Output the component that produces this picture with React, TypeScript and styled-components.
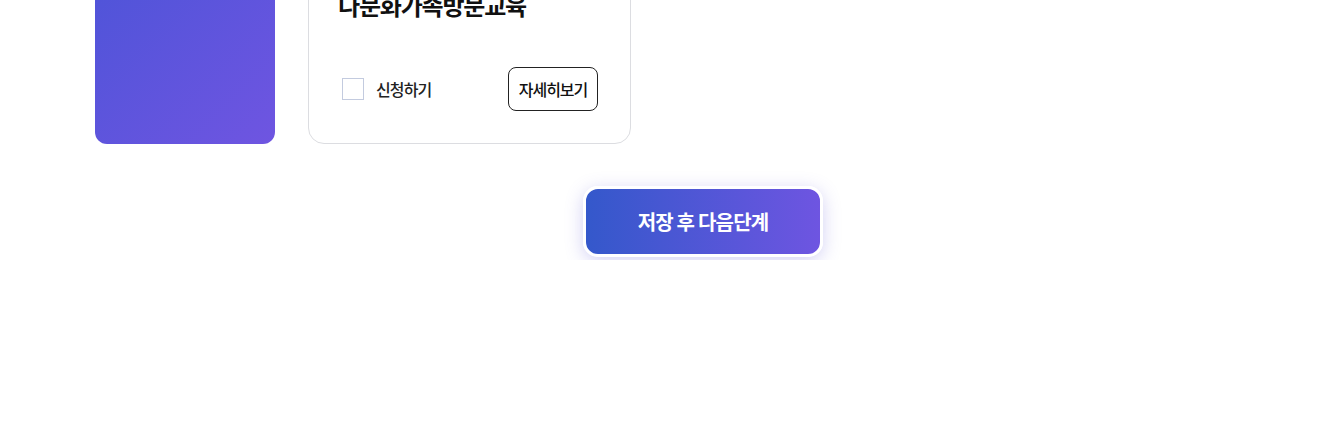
import React from 'react';
import styled, { createGlobalStyle } from 'styled-components';

const GlobalStyle = createGlobalStyle`
  html, body {
    margin: 0;
    padding: 0;
    background: #fff;
  }
  body {
    font-family: "Noto Sans CJK KR", "Noto Sans", sans-serif;
    color: #222;
  }
`;

const Page = styled.div`
  margin-top: -40px;
  padding-left: 95px;
  width: 1216px;
  overflow: hidden;
`;

const CardRow = styled.div`
  display: flex;
  gap: 33px;
  align-items: stretch;
`;

const ThumbCard = styled.div`
  width: 180px;
  height: 184px;
  border-radius: 12px;
  background: linear-gradient(135deg, #4d54d8 0%, #6f55e1 100%);
`;

const ProgramCard = styled.div`
  box-sizing: border-box;
  width: 323px;
  height: 184px;
  border: 1px solid #dcdde1;
  border-radius: 16px;
  padding: 29px 32px 32px 29px;
  display: flex;
  flex-direction: column;
  justify-content: space-between;
`;

const Title = styled.h3`
  margin: 0;
  font-size: 24px;
  line-height: 30px;
  font-weight: 700;
  letter-spacing: -1.2px;
  color: #111;
`;

const Footer = styled.div`
  display: flex;
  align-items: center;
  justify-content: space-between;
  padding-left: 4px;
`;

const Apply = styled.label`
  display: flex;
  align-items: center;
  gap: 12px;
  font-size: 16px;
  font-weight: 500;
  letter-spacing: -0.9px;
  color: #222;
  cursor: pointer;
`;

const Box = styled.span`
  box-sizing: border-box;
  width: 22px;
  height: 22px;
  border: 1px solid #c3cbdf;
  background: #fff;
`;

const DetailButton = styled.button`
  box-sizing: border-box;
  width: 90px;
  height: 44px;
  border: 1px solid #222;
  border-radius: 8px;
  background: #fff;
  font-family: inherit;
  font-size: 16px;
  font-weight: 500;
  letter-spacing: -1px;
  color: #111;
  padding: 0;
  cursor: pointer;
`;

const Actions = styled.div`
  display: flex;
  justify-content: center;
  margin-top: 42px;
  padding-bottom: 3px;
`;

const NextButton = styled.button`
  box-sizing: border-box;
  width: 240px;
  height: 71px;
  border: 3px solid #fff;
  border-radius: 15px;
  background: linear-gradient(90deg, #3458cb 0%, #6e55e1 100%);
  box-shadow: 0 4px 18px rgba(98, 88, 214, 0.28);
  color: #fff;
  font-family: inherit;
  font-size: 20px;
  font-weight: 700;
  letter-spacing: -0.8px;
  cursor: pointer;
`;

export default function App() {
  return (
    <>
      <GlobalStyle />
      <Page>
        <CardRow>
          <ThumbCard />
          <ProgramCard>
            <Title>다문화가족방문교육</Title>
            <Footer>
              <Apply>
                <Box />
                신청하기
              </Apply>
              <DetailButton>자세히보기</DetailButton>
            </Footer>
          </ProgramCard>
        </CardRow>
        <Actions>
          <NextButton>저장 후 다음단계</NextButton>
        </Actions>
      </Page>
    </>
  );
}
